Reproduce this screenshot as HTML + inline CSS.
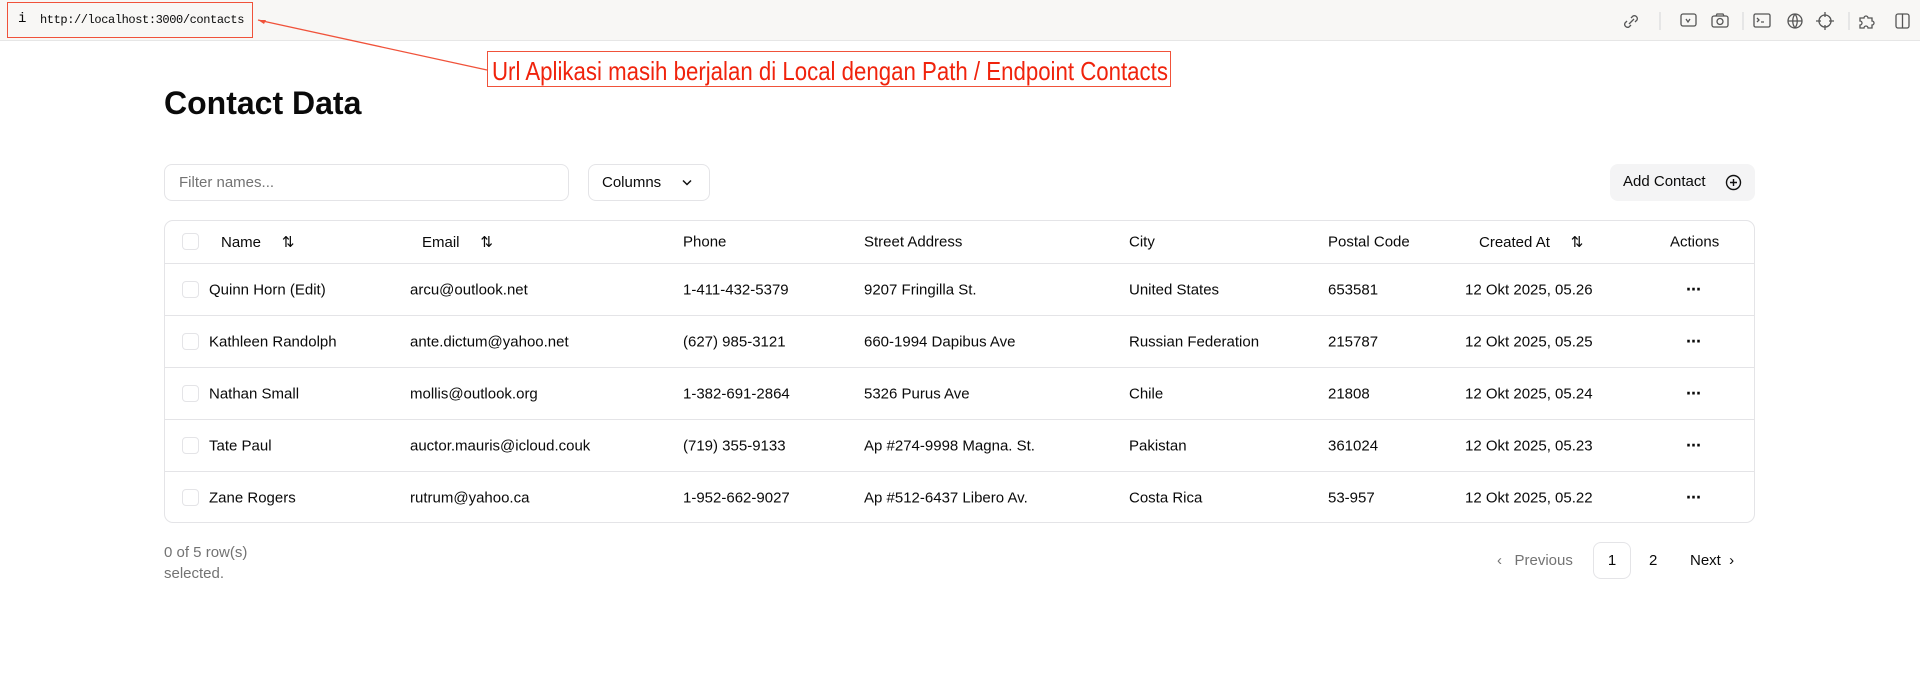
<!DOCTYPE html>
<html><head><meta charset="utf-8"><style>
*{box-sizing:border-box;margin:0;padding:0}
body{width:1920px;height:689px;background:#fff;font-family:"Liberation Sans",Arial,sans-serif;color:#0a0a0a;position:relative;overflow:hidden;font-size:15px}
.top{position:absolute;left:0;top:0;width:1920px;height:41px;background:#f8f7f5;border-bottom:1px solid #e6e6e6}
.abs{position:absolute}
.url{left:7px;top:2px;width:246px;height:36px;border:1.5px solid #f0523a}
.ann{left:487px;top:51px;width:684px;height:36px;border:1.5px solid #f0523a;background:#fff}
.ann span{position:absolute;left:4px;top:4px;color:#f0230c;font-size:26px;white-space:nowrap;transform:scaleX(.855);transform-origin:0 0}
.box{border:1px solid #e4e4e7;border-radius:8px;background:#fff}
.cb{position:absolute;width:17px;height:17px;border:1px solid #e4e4e7;border-radius:4px;left:17px}
.row{position:absolute;left:0;width:1591px;height:52px;border-top:1px solid #e4e4e7}
.row span,.hdr span{position:absolute;top:50%;transform:translateY(-50%);white-space:nowrap}
.hdr{position:absolute;left:0;top:0;width:1591px;height:42px;font-weight:500}
.dots{font-weight:bold;font-size:18px;letter-spacing:-1px}
</style></head><body>
<div class="top">
 <div class="abs url"></div>
 <div class="abs" style="left:18px;top:11px;font-family:'Liberation Mono',monospace;font-size:14px;">i</div>
 <div class="abs" style="left:40px;top:13px;font-family:'Liberation Mono',monospace;font-size:12px;letter-spacing:-0.4px">http://localhost:3000/contacts</div>
 <svg class="abs" style="left:1620px;top:10px" width="300" height="22" viewBox="0 0 300 22" fill="none" stroke="#555" stroke-width="1.3">
  <path d="M9 14l5-5M7 11l-2 2a3 3 0 0 0 4 4l2-2M15 12l2-2a3 3 0 0 0-4-4l-2 2"/>
  <line x1="40" y1="2" x2="40" y2="20" stroke="#ddd"/>
  <rect x="61" y="4" width="15" height="12" rx="2"/><path d="M66 9l2 3 2-3" />
  <rect x="92" y="6" width="16" height="11" rx="2"/><circle cx="100" cy="11.5" r="3"/><path d="M96 6l1-2h6l1 2"/>
  <line x1="123" y1="2" x2="123" y2="20" stroke="#ddd"/>
  <rect x="134" y="4" width="16" height="13" rx="1.5"/><path d="M137 8l2 2-2 2M141 12h3"/>
  <circle cx="175" cy="11" r="7"/><path d="M168 11h14M175 4c-3 4-3 10 0 14M175 4c3 4 3 10 0 14"/>
  <circle cx="205" cy="11" r="6"/><path d="M205 2v5M205 15v5M196 11h5M209 11h5"/>
  <line x1="229" y1="2" x2="229" y2="20" stroke="#ddd"/>
  <path d="M240 8h4a2 2 0 0 1 4 0h4v3a2 2 0 0 1 0 4v3h-4a2 2 0 0 0-4 0h-4v-3a2 2 0 0 0 0-4z"/>
  <rect x="276" y="4" width="13" height="14" rx="2"/><line x1="282.5" y1="4" x2="282.5" y2="18"/>
 </svg>
</div>
<svg class="abs" style="left:0;top:0" width="500" height="90"><line x1="258" y1="20" x2="487" y2="70" stroke="#f0523a" stroke-width="1.3"/><path d="M258 20l8 0-2 4z" fill="#f0523a"/></svg>
<div class="abs ann"><span>Url Aplikasi masih berjalan di Local dengan Path / Endpoint Contacts</span></div>

<div class="abs" style="left:164px;top:85px;font-size:32px;font-weight:bold;">Contact Data</div>

<div class="abs box" style="left:164px;top:164px;width:405px;height:37px;"><span class="abs" style="left:14px;top:9px;color:#737373">Filter names...</span></div>
<div class="abs box" style="left:588px;top:164px;width:122px;height:37px;"><span class="abs" style="left:13px;top:9px;font-weight:500">Columns</span>
<svg class="abs" style="left:93px;top:14px" width="10" height="8" fill="none" stroke="#111" stroke-width="1.5"><path d="M1 1.5l4 4 4-4"/></svg></div>
<div class="abs" style="left:1610px;top:164px;width:145px;height:37px;background:#f4f4f5;border-radius:8px"><span class="abs" style="left:13px;top:9px;font-weight:500">Add Contact</span>
<svg class="abs" style="left:115px;top:10px" width="17" height="17" fill="none" stroke="#111" stroke-width="1.4"><circle cx="8.5" cy="8.5" r="7"/><path d="M8.5 5v7M5 8.5h7"/></svg></div>

<div class="abs box" style="left:164px;top:220px;width:1591px;height:303px;overflow:hidden;border-radius:9px">
 <div class="hdr">
  <div class="cb" style="top:12px"></div>
  <span style="left:56px">Name &nbsp;&nbsp;&nbsp; ⇅</span>
  <span style="left:257px">Email &nbsp;&nbsp;&nbsp; ⇅</span>
  <span style="left:518px">Phone</span>
  <span style="left:699px">Street Address</span>
  <span style="left:964px">City</span>
  <span style="left:1163px">Postal Code</span>
  <span style="left:1314px">Created At &nbsp;&nbsp;&nbsp; ⇅</span>
  <span style="left:1505px">Actions</span>
 </div>
 <div class="row" style="top:42px"><div class="cb" style="top:17px"></div><span style="left:44px;font-weight:500">Quinn Horn (Edit)</span><span style="left:245px">arcu@outlook.net</span><span style="left:518px">1-411-432-5379</span><span style="left:699px">9207 Fringilla St.</span><span style="left:964px">United States</span><span style="left:1163px">653581</span><span style="left:1300px">12 Okt 2025, 05.26</span><span class="dots" style="left:1521px">···</span></div>
 <div class="row" style="top:94px"><div class="cb" style="top:17px"></div><span style="left:44px;font-weight:500">Kathleen Randolph</span><span style="left:245px">ante.dictum@yahoo.net</span><span style="left:518px">(627) 985-3121</span><span style="left:699px">660-1994 Dapibus Ave</span><span style="left:964px">Russian Federation</span><span style="left:1163px">215787</span><span style="left:1300px">12 Okt 2025, 05.25</span><span class="dots" style="left:1521px">···</span></div>
 <div class="row" style="top:146px"><div class="cb" style="top:17px"></div><span style="left:44px;font-weight:500">Nathan Small</span><span style="left:245px">mollis@outlook.org</span><span style="left:518px">1-382-691-2864</span><span style="left:699px">5326 Purus Ave</span><span style="left:964px">Chile</span><span style="left:1163px">21808</span><span style="left:1300px">12 Okt 2025, 05.24</span><span class="dots" style="left:1521px">···</span></div>
 <div class="row" style="top:198px"><div class="cb" style="top:17px"></div><span style="left:44px;font-weight:500">Tate Paul</span><span style="left:245px">auctor.mauris@icloud.couk</span><span style="left:518px">(719) 355-9133</span><span style="left:699px">Ap #274-9998 Magna. St.</span><span style="left:964px">Pakistan</span><span style="left:1163px">361024</span><span style="left:1300px">12 Okt 2025, 05.23</span><span class="dots" style="left:1521px">···</span></div>
 <div class="row" style="top:250px"><div class="cb" style="top:17px"></div><span style="left:44px;font-weight:500">Zane Rogers</span><span style="left:245px">rutrum@yahoo.ca</span><span style="left:518px">1-952-662-9027</span><span style="left:699px">Ap #512-6437 Libero Av.</span><span style="left:964px">Costa Rica</span><span style="left:1163px">53-957</span><span style="left:1300px">12 Okt 2025, 05.22</span><span class="dots" style="left:1521px">···</span></div>
</div>

<div class="abs" style="left:164px;top:542px;color:#737373;line-height:21px">0 of 5 row(s)<br>selected.</div>
<div class="abs" style="left:1497px;top:552px;color:#737373">‹&nbsp;&nbsp; Previous</div>
<div class="abs box" style="left:1593px;top:542px;width:38px;height:37px;text-align:center;line-height:35px;font-weight:500">1</div>
<div class="abs" style="left:1649px;top:552px;font-weight:500">2</div>
<div class="abs" style="left:1690px;top:552px;font-weight:500">Next &nbsp;›</div>
</body></html>
